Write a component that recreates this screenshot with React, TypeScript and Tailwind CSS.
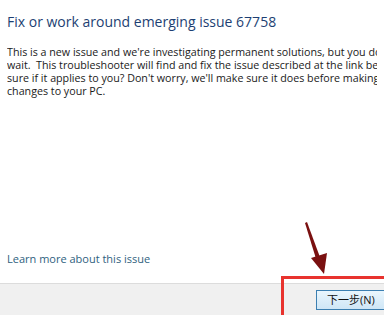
export default function App() {
  const font = { fontFamily: '"Open Sans", "Noto Sans", "Noto Sans CJK SC", sans-serif' };
  return (
    <div className="relative w-[384px] h-[315px] overflow-hidden bg-white" style={font}>
      <div className="flex flex-col h-[283px] px-[7px]">
        <div className="pt-[12px] text-[14px] leading-[20px] text-[#1d3f73] whitespace-nowrap">
          Fix or work around emerging issue 67758
        </div>
        <div className="mt-[14px] text-[10.7px] leading-[13px] text-[#1a1a1a] whitespace-pre overflow-hidden">
          <div>This is a new issue and we're investigating permanent solutions, but you don't have to</div>
          <div>wait.  This troubleshooter will find and fix the issue described at the link below.  Not</div>
          <div>sure if it applies to you? Don't worry, we'll make sure it does before making any</div>
          <div>changes to your PC.</div>
        </div>
        <div className="mt-auto mb-[17px] text-[11px] leading-[14px] text-[#2f5f80]">Learn more about this issue</div>
      </div>
      <div className="h-[32px] bg-[#f0f0f0] border-t border-[#dcdcdc] flex justify-end items-center">
        <div className="w-[70px] h-[20px] mr-[-2px] border border-[#3c7fb1] bg-gradient-to-b from-[#eaf6fd] to-[#cfe6f6] text-[11px] leading-[18px] text-[#111] pl-[10px] whitespace-nowrap">
          下一步(N)
        </div>
      </div>
      <div className="absolute left-[281px] top-[276px] w-[106px] h-[42px] border-[3px] border-[#e8332e]" />
      <svg className="absolute left-0 top-0" width="384" height="315">
        <polygon points="305,223 307,222 321,260 317,262" fill="#7a1010" />
        <polygon points="311,258 327,253 324,274" fill="#7a1010" />
      </svg>
    </div>
  );
}
